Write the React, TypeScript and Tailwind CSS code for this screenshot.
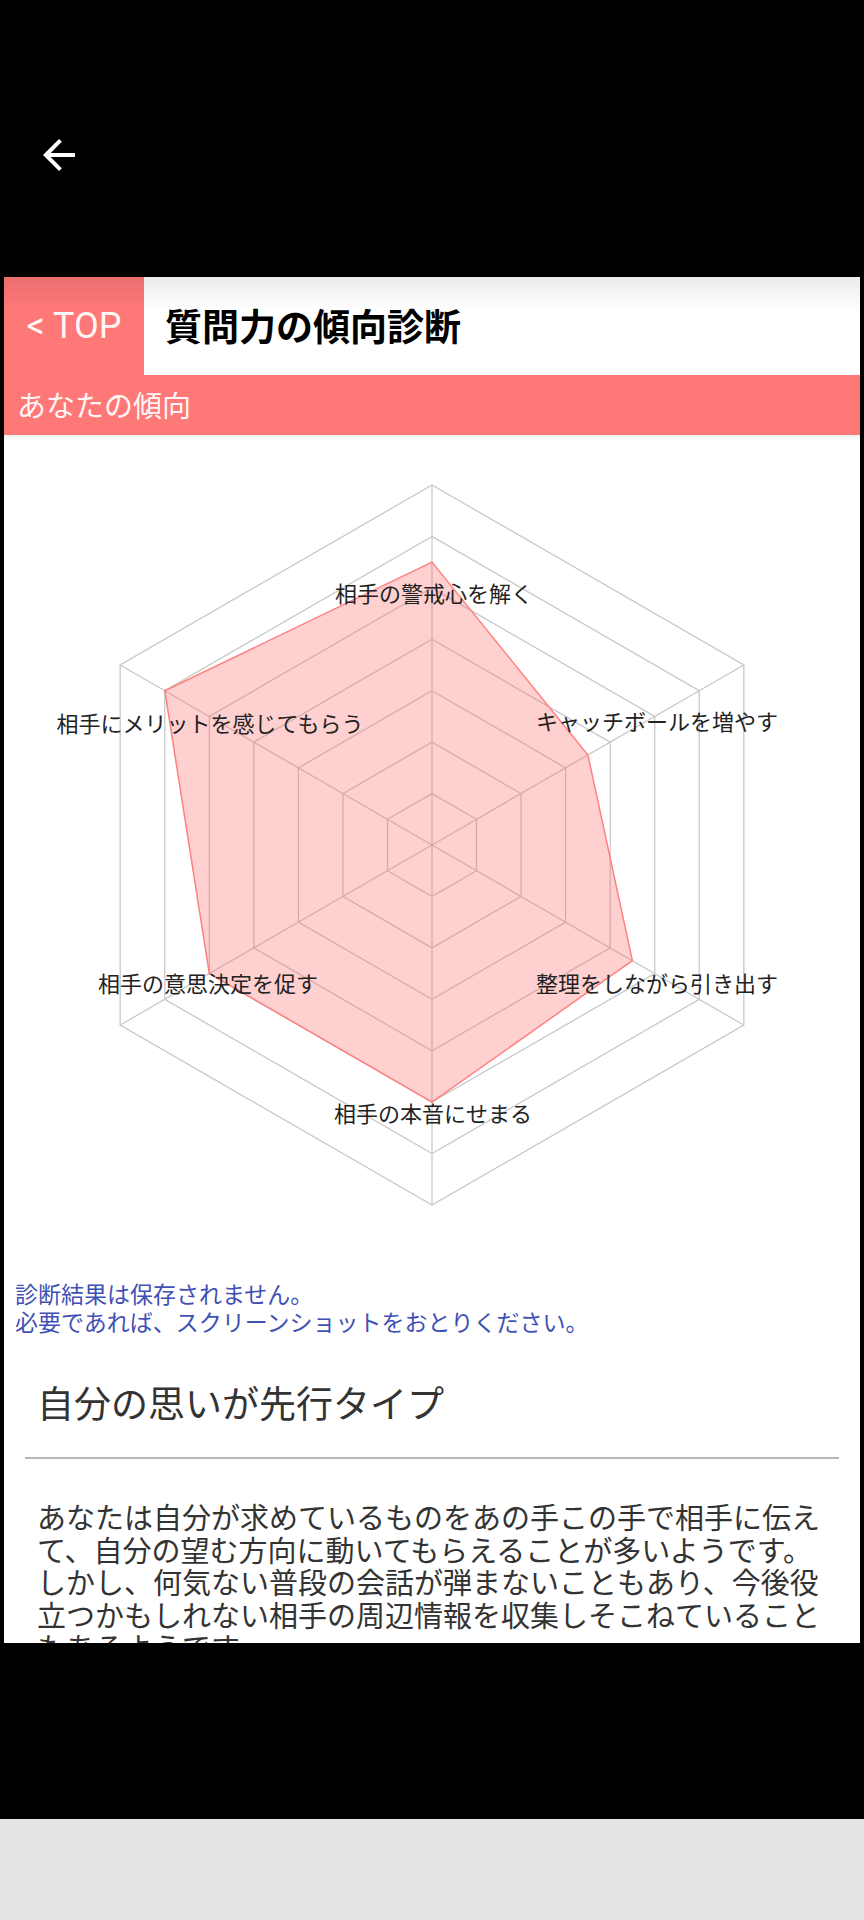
import React from "react";

const CX = 428;
const CY = 410;
const R = 360;
const STEPS = 7;

// 上から時計回り
const axes = [
    {label: "相手の警戒心を解く", value: 5.5, lx: 430, ly: 157},
    {label: "キャッチボールを増やす", value: 3.5, lx: 653, ly: 285},
    {label: "整理をしながら引き出す", value: 4.5, lx: 653, ly: 547},
    {label: "相手の本音にせまる", value: 5, lx: 429, ly: 677},
    {label: "相手の意思決定を促す", value: 5, lx: 204, ly: 547},
    {label: "相手にメリットを感じてもらう", value: 6, lx: 206, ly: 287},
];

function pt(i: number, r: number) {
    const a = (-90 + i * 60) * Math.PI / 180;
    return [CX + r * Math.cos(a), CY + r * Math.sin(a)];
}

function ring(r: number) {
    return axes.map((_, i) => pt(i, r).map(n => n.toFixed(1)).join(",")).join(" ");
}

function RadarChart() {
    const data = axes.map((ax, i) => pt(i, R * ax.value / STEPS).map(n => n.toFixed(1)).join(",")).join(" ");

    return (
        <svg width="856" height="830" viewBox="0 0 856 830" className="block">
            {Array.from({length: STEPS}).map((_, k) => (
                <polygon key={k} points={ring(R * (k + 1) / STEPS)} fill="none" stroke="#c9c9c9" strokeWidth="1.3"/>
            ))}
            {axes.map((_, i) => {
                const [x, y] = pt(i, R);
                return <line key={i} x1={CX} y1={CY} x2={x} y2={y} stroke="#c9c9c9" strokeWidth="1.3"/>
            })}
            <polygon points={data} fill="rgba(255,100,100,0.3)" stroke="#ff8080" strokeWidth="1.5"/>
            {axes.map(ax => (
                <text key={ax.label} x={ax.lx} y={ax.ly} textAnchor="middle" dominantBaseline="central"
                      fontSize="22" fill="#222" fontFamily="'Noto Sans CJK JP', sans-serif">{ax.label}</text>
            ))}
        </svg>
    )
}

export default function App() {
    return (
        <div className="flex h-[1920px] w-full flex-col bg-black font-['Noto_Sans_CJK_JP',sans-serif]">
            <div className="h-[277px] shrink-0 pl-[35px] pt-[131px]">
                <svg width="48" height="48" viewBox="0 0 24 24" fill="#fff">
                    <path d="M20 11H7.83l5.59-5.59L12 4l-8 8 8 8 1.41-1.41L7.83 13H20v-2z"/>
                </svg>
            </div>

            <div className="mx-[4px] h-[1366px] shrink-0 overflow-hidden bg-white">
                <div className="relative flex h-[98px]">
                    <div className="flex w-[140px] items-center justify-center bg-[#ff7878] font-['Roboto',sans-serif] text-[36px] text-white/95">
                        &lt; TOP
                    </div>
                    <div className="flex items-center pl-[21px] text-[37px] font-bold text-black">
                        質問力の傾向診断
                    </div>
                    <div className="pointer-events-none absolute inset-x-0 top-0 h-[34px] bg-linear-to-b from-black/8 to-transparent"/>
                </div>

                <div className="relative flex h-[60px] items-center bg-[#ff7878] pl-[13px] text-[29px] text-white/95 shadow-[0_3px_5px_rgba(0,0,0,0.07)]">
                    あなたの傾向
                </div>

                <RadarChart/>

                <div className="mt-[14px] px-[11px] text-[23px] leading-[28px] text-[#3f51b5]">
                    <p>診断結果は保存されません。</p>
                    <p>必要であれば、スクリーンショットをおとりください。</p>
                </div>

                <h2 className="mt-[43px] pl-[33px] text-[37px] leading-[48px] text-[#333]">自分の思いが先行タイプ</h2>

                <div className="mx-[21px] mt-[31px] h-[2px] bg-[#b8b8b8]"/>

                <p className="mt-[41px] pl-[33px] pr-[30px] text-[29px] leading-[32.5px] text-[#333]">
                    あなたは自分が求めているものをあの手この手で相手に伝えて、自分の望む方向に動いてもらえることが多いようです。しかし、何気ない普段の会話が弾まないこともあり、今後役立つかもしれない相手の周辺情報を収集しそこねていることもあるようです。
                </p>
            </div>

            <div className="h-[176px] shrink-0 bg-black"/>
            <div className="flex-1 bg-[#e4e4e4]"/>
        </div>
    );
}
